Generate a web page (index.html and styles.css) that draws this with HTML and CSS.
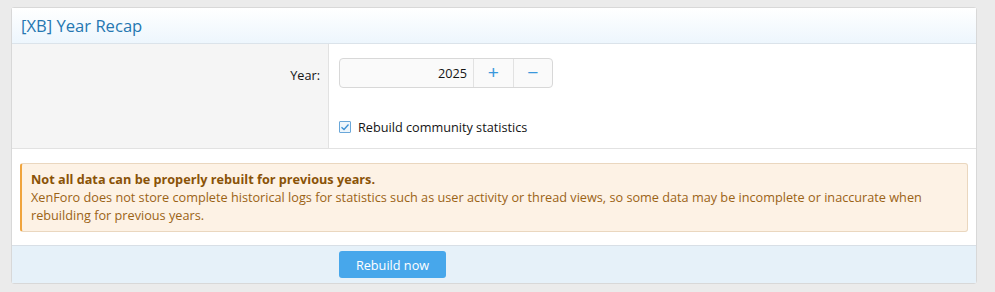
FILE: index.html
```html
<!DOCTYPE html>
<html lang="en">
<head>
  <meta charset="UTF-8">
  <title>[XB] Year Recap</title>
  <link rel="stylesheet" href="styles.css">
</head>
<body>

  <form class="block" id="yearRecapForm">
    <h2 class="block-header">[XB] Year Recap</h2>

    <div class="form-row">
      <div class="form-label">
        <label for="year">Year:</label>
      </div>
      <div class="form-input">
        <div class="input-group">
          <input type="text" id="year" name="year" value="2025">
          <button type="button" class="step-btn">+</button>
          <button type="button" class="step-btn">&minus;</button>
        </div>
        <label class="check">
          <span class="check-box">
            <svg width="10" height="10" viewBox="0 0 10 10"><path d="M1.5 5.2 L4 7.5 L8.5 2.5" fill="none" stroke="#3b8fd4" stroke-width="1.3"/></svg>
          </span>
          Rebuild community statistics
        </label>
      </div>
    </div>

    <div class="notice-wrap">
      <div class="notice">
        <strong>Not all data can be properly rebuilt for previous years.</strong><br>
        XenForo does not store complete historical logs for statistics such as user activity or thread views, so some data may be incomplete or inaccurate when rebuilding for previous years.
      </div>
    </div>

    <div class="block-footer">
      <button type="submit" class="submit-btn">Rebuild now</button>
    </div>
  </form>

</body>
</html>
```

FILE: styles.css
```css
body {
  margin: 0;
  padding: 7px 18px 0 11px;
  background-color: #ebebeb;
  font-family: "Open Sans", "Noto Sans", sans-serif;
  font-size: 12.7px;
  line-height: 18px;
  color: #141414;
}
.block {
  background-color: white;
  border: 1px solid #d8d8d8;
  border-radius: 3px;
}
.block-header {
  margin: 0;
  height: 35px;
  line-height: 35px;
  padding: 0 9px;
  font-size: 16.6px;
  font-weight: normal;
  color: #2577b1;
  background: linear-gradient(to bottom, #ffffff, #edf6fd);
  border-bottom: 1px solid #dbe3ea;
}
.form-row {
  display: flex;
  border-bottom: 1px solid #e2e2e2;
}
.form-label {
  width: 317px;
  flex-shrink: 0;
  background-color: #f5f5f5;
  border-right: 1px solid #e2e2e2;
  text-align: right;
  padding: 22px 8px 0 0;
  box-sizing: border-box;
}
.form-input {
  flex: 1;
  padding: 14px 10px 12px 10px;
}
.input-group {
  display: flex;
  width: 214px;
  height: 30px;
  border: 1px solid #d8d8d8;
  border-radius: 4px;
  background-color: #fafafa;
  box-sizing: border-box;
}
.input-group input {
  width: 127px;
  border: none;
  background: transparent;
  text-align: right;
  padding: 0 6px 0 0;
  font-family: inherit;
  font-size: 12.7px;
  color: #141414;
  outline: none;
}
.step-btn {
  flex: 1;
  border: none;
  border-left: 1px solid #e2e2e2;
  background: transparent;
  color: #3a98dc;
  font-family: "Liberation Sans", sans-serif;
  font-size: 19px;
  padding: 0;
  cursor: pointer;
}
.check {
  display: flex;
  align-items: center;
  gap: 7px;
  margin-top: 30px;
}
.check-box {
  display: flex;
  align-items: center;
  justify-content: center;
  width: 10px;
  height: 10px;
  border: 1px solid #6aa7d9;
  background-color: #eef6fc;
  border-radius: 1px;
}
.notice-wrap {
  padding: 14px 8px 13px;
  border-bottom: 1px solid #d8dfe6;
}
.notice {
  background-color: #fdf2e5;
  border: 1px solid #ead7bf;
  border-left: 2px solid #f0a43d;
  border-radius: 3px;
  padding: 6px 10px 7px 9px;
  line-height: 18px;
  color: #9b6316;
}
.notice strong {
  color: #8a5307;
}
.block-footer {
  background-color: #e6f1f9;
  padding: 5px 0 5px 327px;
}
.submit-btn {
  display: block;
  background-color: #47a7eb;
  color: white;
  border: none;
  border-radius: 3px;
  width: 107px;
  height: 27px;
  font-family: inherit;
  font-size: 12.7px;
  cursor: pointer;
}
```
